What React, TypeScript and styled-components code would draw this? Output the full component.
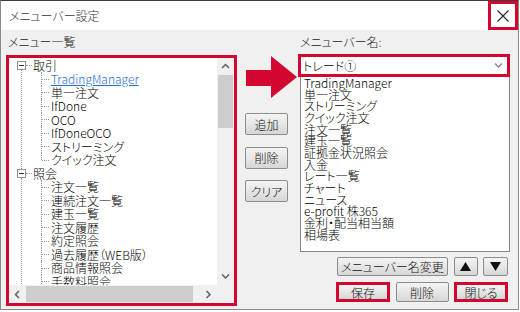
import styled, { createGlobalStyle } from 'styled-components'

const RED = '#d2062e'

const GlobalStyle = createGlobalStyle`
  html, body {
    margin: 0;
    padding: 0;
    background: #fff;
  }
  body {
    font-family: "Noto Sans CJK JP", "Noto Sans", sans-serif;
    font-size: 12px;
    font-weight: 300;
    color: #000;
    font-feature-settings: "palt";
  }
  * {
    box-sizing: border-box;
  }
`

const Window = styled.div`
  width: 519px;
  height: 310px;
  border: 1px solid #8a8a8a;
  border-top-color: #3c3c3c;
  background: #f0f0f0;
  display: flex;
  flex-direction: column;
`

const TitleBar = styled.div`
  height: 29px;
  flex: none;
  background: #fff;
  display: flex;
  align-items: center;
  justify-content: space-between;
  padding-left: 8px;
`

const Title = styled.span`
  color: #333;
  font-size: 12px;
`

const CloseBox = styled.div`
  width: 30px;
  height: 29px;
  border: 3px solid ${RED};
  display: flex;
  align-items: center;
  justify-content: center;
`

const Body = styled.div`
  position: relative;
  flex: 1;
  display: flex;
  padding-left: 5px;
`

const LeftPane = styled.div`
  width: 231px;
  display: flex;
  flex-direction: column;
`

const MiddlePane = styled.div`
  width: 43px;
  margin-left: 8px;
  padding-top: 83px;
  display: flex;
  flex-direction: column;
  gap: 11.5px;
`

const RightPane = styled.div`
  width: 212px;
  margin-left: 10px;
  display: flex;
  flex-direction: column;
`

const Label = styled.div<{ $h: number }>`
  height: ${p => p.$h}px;
  padding: 5px 0 0 2px;
  line-height: 14px;
  color: #222;
`

const TreeFrame = styled.div`
  height: 251px;
  border: 3px solid ${RED};
  background: #fff;
  display: grid;
  grid-template-columns: 1fr 17px;
  grid-template-rows: 1fr 18px;
`

const TreeViewport = styled.div`
  overflow: hidden;
  padding-top: 0.5px;
`

const Group = styled.div<{ $next?: boolean }>`
  position: relative;
  &::before {
    content: '';
    position: absolute;
    left: 12px;
    top: 11px;
    bottom: ${p => (p.$next ? '-2px' : 'auto')};
    border-left: 1px dotted #9a9a9a;
  }
`

const ParentRow = styled.div`
  height: 13.5px;
  line-height: 13.5px;
  display: flex;
  align-items: center;
  white-space: nowrap;
`

const Expander = styled.span`
  position: relative;
  z-index: 1;
  width: 9px;
  height: 9px;
  margin-left: 8px;
  border: 1px solid #919191;
  background: #fff;
  display: flex;
  align-items: center;
  justify-content: center;
  &::after {
    content: '';
    width: 5px;
    height: 1px;
    background: #333;
  }
`

const Connector = styled.span`
  width: 6px;
  border-top: 1px dotted #9a9a9a;
  margin-right: 1px;
`

const ChildRow = styled.div<{ $last?: boolean; $link?: boolean }>`
  position: relative;
  height: 13.5px;
  line-height: 13.5px;
  padding-left: 42px;
  white-space: nowrap;
  color: ${p => (p.$link ? '#1f6fd6' : '#000')};
  text-decoration: ${p => (p.$link ? 'underline' : 'none')};
  &::before {
    content: '';
    position: absolute;
    left: 32px;
    top: 0;
    bottom: ${p => (p.$last ? '50%' : '0')};
    border-left: 1px dotted #9a9a9a;
  }
  &::after {
    content: '';
    position: absolute;
    left: 33px;
    top: 50%;
    width: 7px;
    border-top: 1px dotted #9a9a9a;
  }
`

const VScroll = styled.div`
  background: #f0f0f0;
  display: flex;
  flex-direction: column;
`

const HScroll = styled.div`
  background: #f0f0f0;
  display: flex;
`

const ScrollArrow = styled.div<{ $horizontal?: boolean }>`
  flex: none;
  width: ${p => (p.$horizontal ? '17px' : 'auto')};
  height: ${p => (p.$horizontal ? 'auto' : '17px')};
  display: flex;
  align-items: center;
  justify-content: center;
`

const Track = styled.div`
  flex: 1;
`

const VThumb = styled.div`
  height: 53px;
  margin: 0 1px;
  background: #cdcdcd;
`

const HThumb = styled.div`
  width: 167px;
  margin: 1px 0;
  background: #cdcdcd;
`

const Corner = styled.div`
  background: #f0f0f0;
`

const Button = styled.button<{ $w: number; $h: number; $marked?: boolean }>`
  width: ${p => p.$w}px;
  height: ${p => p.$h}px;
  flex: none;
  padding: 0;
  font-family: inherit;
  font-size: 12px;
  font-weight: 300;
  font-feature-settings: "palt";
  color: #111;
  border: ${p => (p.$marked ? `3px solid ${RED}` : '1px solid #8c8c8c')};
  border-radius: ${p => (p.$marked ? '0' : '2px')};
  background: linear-gradient(#f4f4f4, #e6e6e6 50%, #d6d6d6);
  display: flex;
  align-items: center;
  justify-content: center;
`

const Combo = styled.div`
  height: 23px;
  border: 3px solid ${RED};
  background: #fff;
  display: flex;
  align-items: center;
  justify-content: space-between;
  padding: 0 4px 0 2px;
`

const ItemList = styled.div`
  width: 210px;
  height: 175px;
  margin-left: 2px;
  border: 1px solid #828790;
  border-top: none;
  background: #fff;
  padding-left: 3px;
  line-height: 11.67px;
  overflow: hidden;
`

const ListItem = styled.div`
  height: 11.67px;
  white-space: nowrap;
`

const ButtonRow = styled.div<{ $top: number }>`
  margin-top: ${p => p.$top}px;
  padding-right: 2px;
  display: flex;
  justify-content: flex-end;
  gap: 5.5px;
`

const Pointer = styled.svg`
  position: absolute;
  left: 245px;
  top: 26px;
`

const groups = [
  {
    label: '取引',
    items: ['TradingManager', '単一注文', 'IfDone', 'OCO', 'IfDoneOCO', 'ストリーミング', 'クイック注文']
  },
  {
    label: '照会',
    items: ['注文一覧', '連続注文一覧', '建玉一覧', '注文履歴', '約定照会', '過去履歴（WEB版）', '商品情報照会', '手数料照会', '入出金履歴']
  },
  { label: '入出金', items: ['入金'] }
]

const menuItems = [
  'TradingManager',
  '単一注文',
  'ストリーミング',
  'クイック注文',
  '注文一覧',
  '建玉一覧',
  '証拠金状況照会',
  '入金',
  'レート一覧',
  'チャート',
  'ニュース',
  'e-profit 株365',
  '金利・配当相当額',
  '相場表'
]

function Chevron({ dir, color = '#606060' }: { dir: 'up' | 'down' | 'left' | 'right'; color?: string }) {
  const points = {
    up: '1,5 4.5,1.5 8,5',
    down: '1,1.5 4.5,5 8,1.5',
    left: '5,1 1.5,4.5 5,8',
    right: '1.5,1 5,4.5 1.5,8'
  }[dir]
  const vertical = dir === 'up' || dir === 'down'
  return (
    <svg width={vertical ? 9 : 7} height={vertical ? 7 : 9}>
      <polyline points={points} fill="none" stroke={color} strokeWidth="1.5" />
    </svg>
  )
}

function Triangle({ up }: { up?: boolean }) {
  return (
    <svg width="11" height="9">
      <polygon points={up ? '0,9 5.5,0 11,9' : '0,0 5.5,9 11,0'} fill="#111" />
    </svg>
  )
}

function App() {
  return (
    <>
      <GlobalStyle />
      <Window>
        <TitleBar>
          <Title>メニューバー設定</Title>
          <CloseBox>
            <svg width="12" height="12">
              <path d="M0.5 0.5 L11.5 11.5 M11.5 0.5 L0.5 11.5" stroke="#222" strokeWidth="1.1" />
            </svg>
          </CloseBox>
        </TitleBar>
        <Body>
          <LeftPane>
            <Label $h={25}>メニュー一覧</Label>
            <TreeFrame>
              <TreeViewport>
                {groups.map((g, gi) => (
                  <Group key={g.label} $next={gi < groups.length - 1}>
                    <ParentRow>
                      <Expander />
                      <Connector />
                      {g.label}
                    </ParentRow>
                    {g.items.map((item, i) => (
                      <ChildRow
                        key={item}
                        $last={i === g.items.length - 1}
                        $link={item === 'TradingManager'}
                      >
                        {item}
                      </ChildRow>
                    ))}
                  </Group>
                ))}
              </TreeViewport>
              <VScroll>
                <ScrollArrow>
                  <Chevron dir="up" />
                </ScrollArrow>
                <VThumb />
                <Track />
                <ScrollArrow>
                  <Chevron dir="down" />
                </ScrollArrow>
              </VScroll>
              <HScroll>
                <ScrollArrow $horizontal>
                  <Chevron dir="left" />
                </ScrollArrow>
                <HThumb />
                <Track />
                <ScrollArrow $horizontal>
                  <Chevron dir="right" />
                </ScrollArrow>
              </HScroll>
              <Corner />
            </TreeFrame>
          </LeftPane>

          <MiddlePane>
            <Button $w={43} $h={22}>追加</Button>
            <Button $w={43} $h={22}>削除</Button>
            <Button $w={43} $h={22}>クリア</Button>
          </MiddlePane>

          <RightPane>
            <Label $h={24}>メニューバー名:</Label>
            <Combo>
              <span>トレード①</span>
              <Chevron dir="down" color="#8a8a8a" />
            </Combo>
            <ItemList>
              {menuItems.map(item => (
                <ListItem key={item}>{item}</ListItem>
              ))}
            </ItemList>
            <ButtonRow $top={5}>
              <Button $w={111} $h={19}>メニューバー名変更</Button>
              <Button $w={24} $h={19}>
                <Triangle up />
              </Button>
              <Button $w={25} $h={19}>
                <Triangle />
              </Button>
            </ButtonRow>
            <ButtonRow $top={6}>
              <Button $w={54} $h={20} $marked>保存</Button>
              <Button $w={53} $h={20}>削除</Button>
              <Button $w={54} $h={20} $marked>閉じる</Button>
            </ButtonRow>
          </RightPane>

          <Pointer width="52" height="43">
            <rect x="0" y="14" width="26" height="16" fill={RED} />
            <polygon points="25,0 25,42 51,21" fill={RED} />
          </Pointer>
        </Body>
      </Window>
    </>
  )
}

export default App
